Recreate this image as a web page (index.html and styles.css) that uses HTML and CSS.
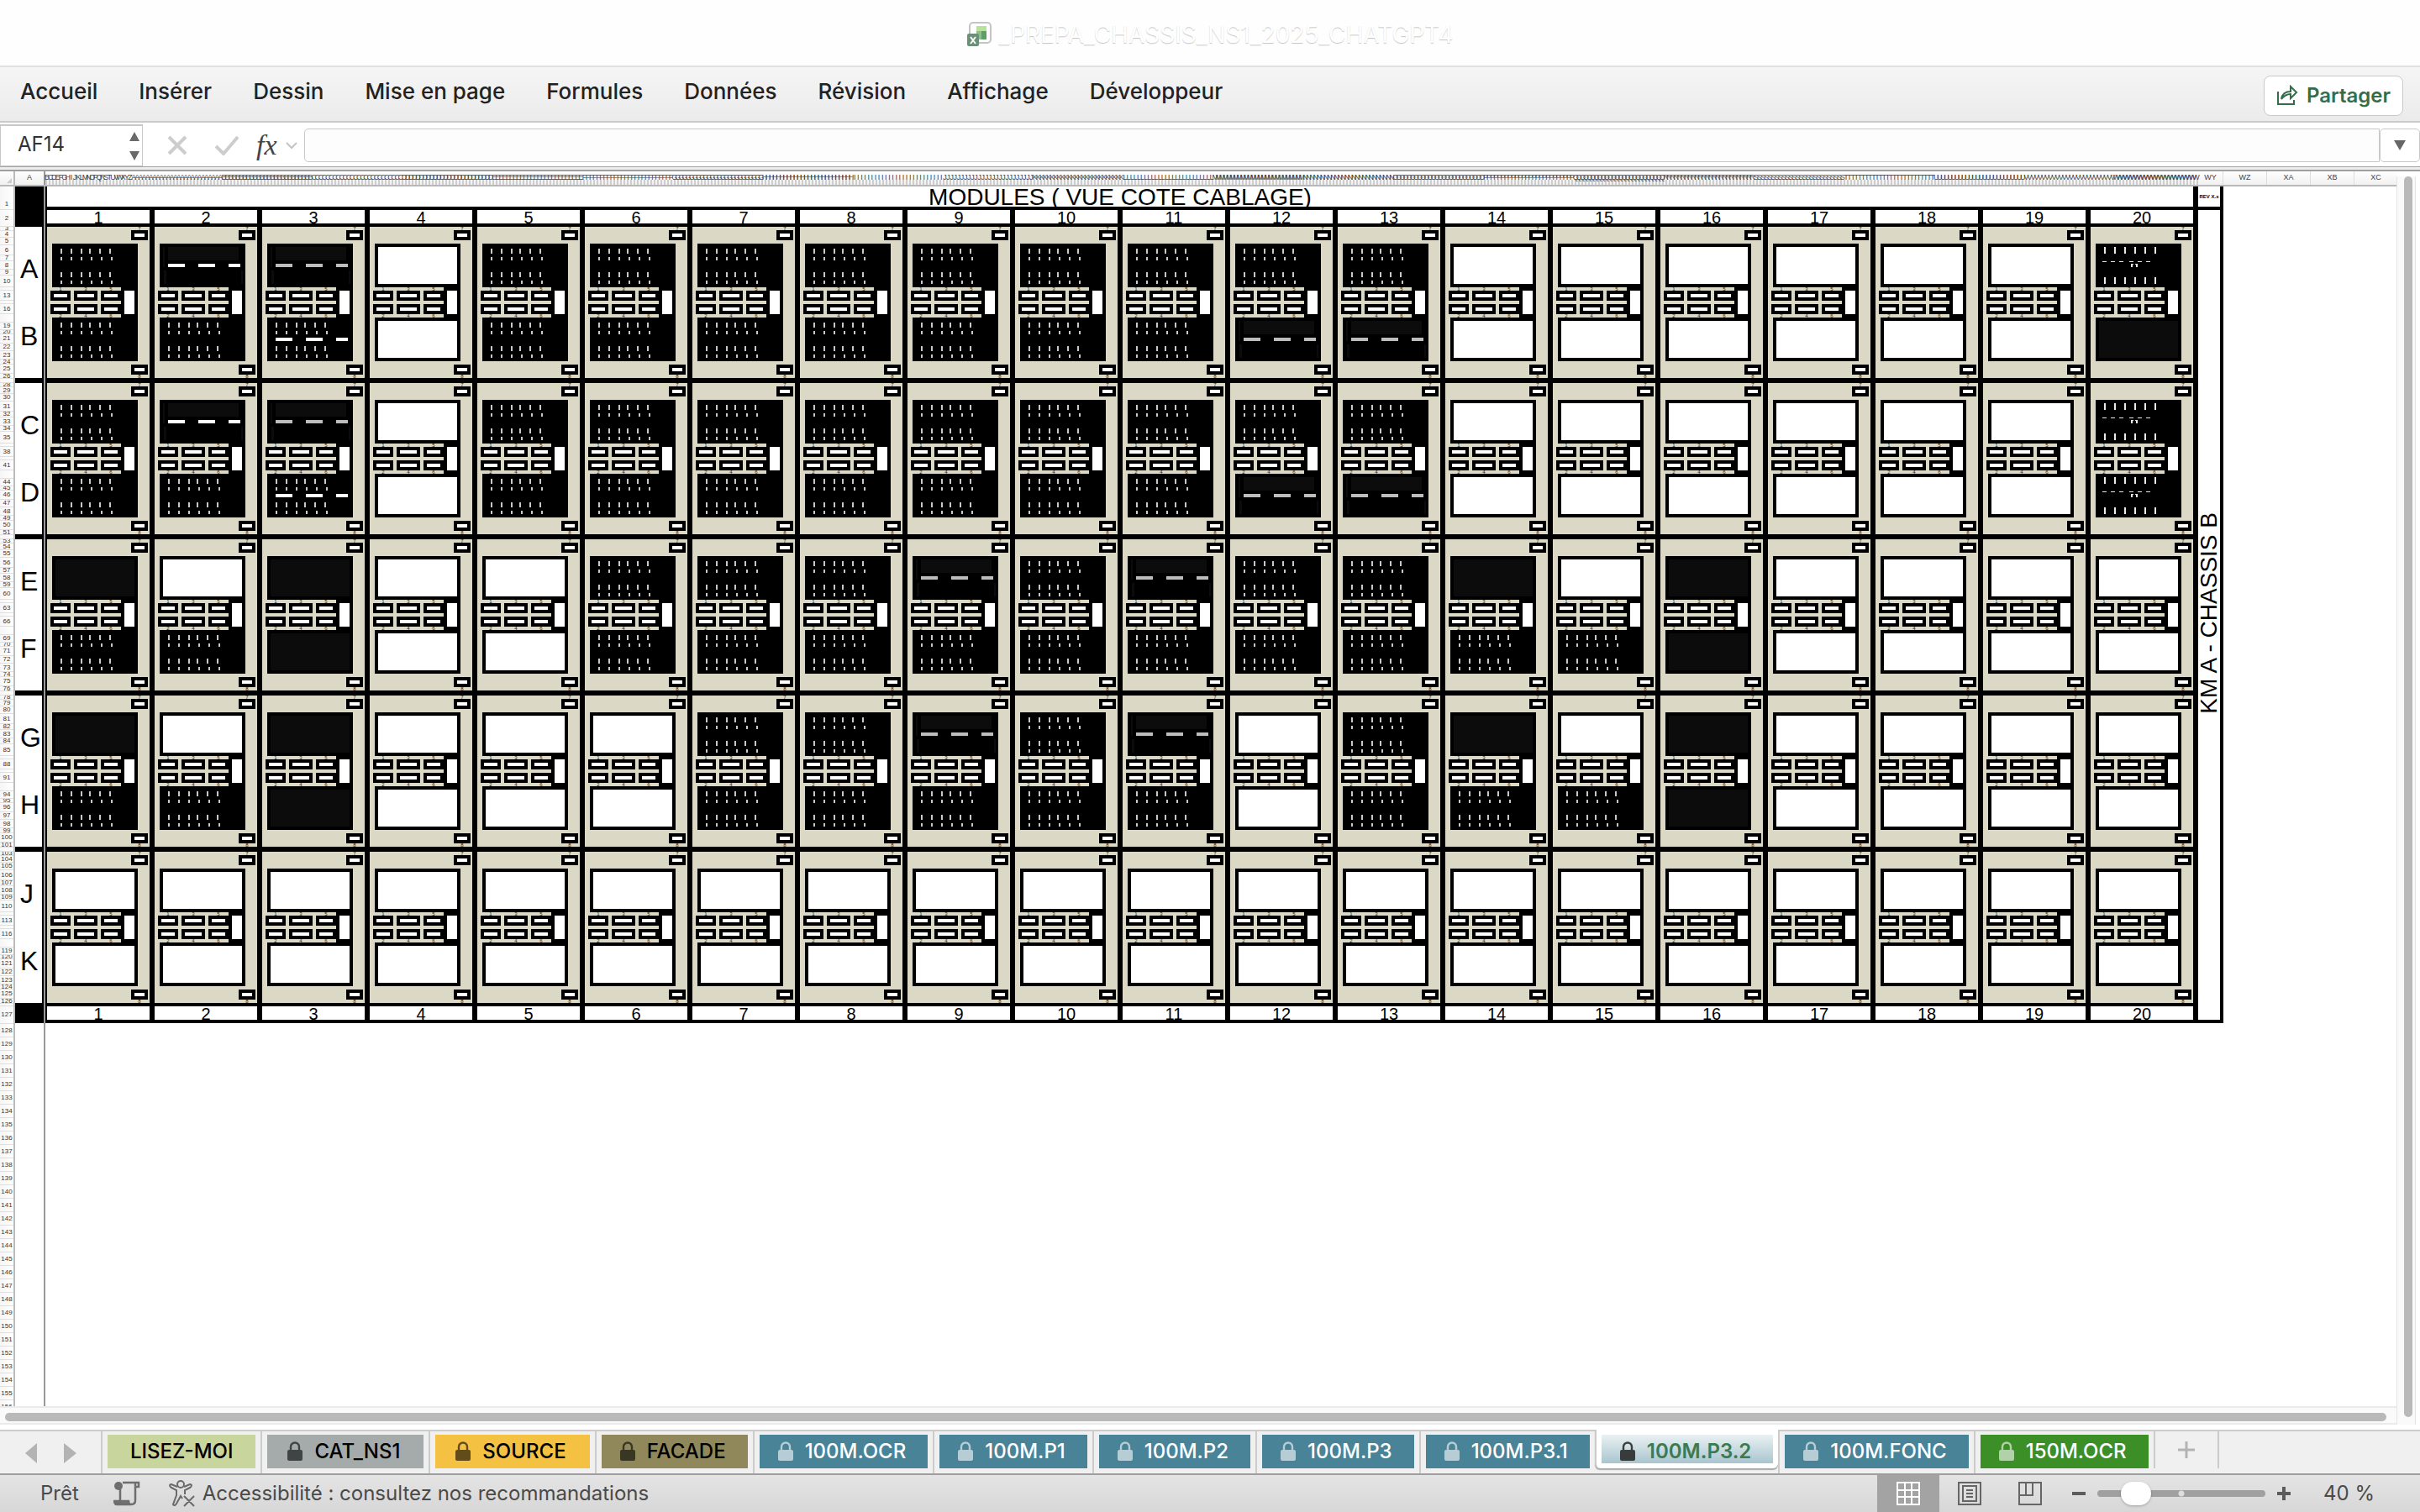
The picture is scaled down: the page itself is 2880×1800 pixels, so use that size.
FILE: index.html
```html
<!DOCTYPE html>
<html lang="fr">
<head>
<meta charset="utf-8">
<title>_PREPA_CHASSIS_NS1_2025_CHATGPT4</title>
<link rel="stylesheet" href="styles.css">
</head>
<body>
<svg class="defs" aria-hidden="true">
  <defs>
    <g id="pins" fill="#c9c9c9">
      <path d="M10 6h2v6h-2zM22 6h2v6h-2zM34 6h2v6h-2zM44 6h2v6h-2zM56 6h2v6h-2zM68 6h2v6h-2z"/>
      <path d="M10 16h2v4h-2zM22 16h2v4h-2zM34 16h2v4h-2zM46 16h2v4h-2zM58 16h2v4h-2zM70 16h2v4h-2z"/>
      <path d="M10 34h2v6h-2zM22 34h2v6h-2zM34 34h2v6h-2zM44 34h2v6h-2zM56 34h2v6h-2zM68 34h2v6h-2z"/>
      <path d="M10 44h2v4h-2zM22 44h2v4h-2zM34 44h2v4h-2zM46 44h2v4h-2zM58 44h2v4h-2zM70 44h2v4h-2z"/>
    </g>
    <path id="dash" d="M10 24h20v4h-20zM46 24h20v4h-20zM82 24h14v4h-14z"/>
    <path id="shade" fill="#0c0c0c" d="M10 4h84v16h-84zM4 4h2v24h-2zM5 32h3v16h-3zM97 32h2v16h-2z"/>
    <symbol id="lock" viewBox="0 0 18 24"><path d="M4 11V6.500a5 5 0 0 1 10 0V11" fill="none" stroke="currentColor" stroke-width="2.400"/><rect y="10" width="18" height="13" rx="2" fill="currentColor"/></symbol>
  </defs>
</svg>

<header class="titlebar">
  <svg class="doc-icon" viewBox="0 0 32 30"><rect x="4" y="1" width="25" height="24" rx="4" fill="#fdfdfd" stroke="#c4c4c4" stroke-width="2"/><path d="M12 5h12v6H12z" fill="#b5e39b"/><path d="M12 11h12v10H12z" fill="#8fbf86"/><path d="M18 11h6v10h-6z" fill="#5f9c68"/><rect x="1" y="14" width="14" height="15" rx="2" fill="#6a9078"/><path d="M5 18l6 8M11 18l-6 8" stroke="#fff" stroke-width="2"/></svg>
  <span class="doc-name">_PREPA_CHASSIS_NS1_2025_CHATGPT4</span>
</header>

<nav class="ribbon">
  <a href="#">Accueil</a><a href="#">Insérer</a><a href="#">Dessin</a><a href="#">Mise en page</a><a href="#">Formules</a><a href="#">Données</a><a href="#">Révision</a><a href="#">Affichage</a><a href="#">Développeur</a>
  <button class="share" type="button">
    <svg width="26" height="26" viewBox="0 0 26 26" fill="none" stroke="currentColor" stroke-width="2"><path d="M2 8v15h19v-5"/><path d="M6 17c1-7 5-9 11-9V2l7 7-7 7v-5c-5 0-8 2-11 6z"/></svg>
    Partager
  </button>
</nav>

<div class="formula-bar">
  <div class="name-box">
    <input type="text" value="AF14" aria-label="Zone Nom">
    <svg width="14" height="36" viewBox="0 0 14 36" fill="#6a6a6a"><path d="M7 1l6 11H1zM7 35l6-11H1z"/></svg>
  </div>
  <button type="button" class="plain" aria-label="Annuler"><svg width="24" height="24" viewBox="0 0 24 24"><path d="M2 2l20 20M22 2L2 22" stroke="#cdcdcd" stroke-width="4"/></svg></button>
  <button type="button" class="plain check" aria-label="Entrer"><svg width="30" height="24" viewBox="0 0 30 24"><path d="M2 13l9 9L28 2" fill="none" stroke="#cdcdcd" stroke-width="4"/></svg></button>
  <button type="button" class="plain fx" aria-label="Insérer une fonction">fx<svg width="14" height="10" viewBox="0 0 14 10"><path d="M1 2l6 6 6-6" fill="none" stroke="#c4c4c4" stroke-width="2"/></svg></button>
  <input class="formula" type="text" aria-label="Barre de formule">
  <button type="button" class="expand" aria-label="Développer"><svg width="14" height="12" viewBox="0 0 14 12"><path d="M0 0h14L7 12z" fill="#666"/></svg></button>
</div>

<main class="workspace">
  <div class="sheet">
    <div class="col-heads">
      <span class="corner"><svg width="6" height="6" viewBox="0 0 6 6"><path d="M6 0v6H0z" fill="#ccc"/></svg></span>
      <span class="head-a">A</span>
      <div class="head-dense" id="dense"></div>
      <span class="head-wy">WY</span><span>WZ</span><span>XA</span><span>XB</span><span>XC</span>
    </div>
    <div class="grid">
      <div class="row-nums" id="rownums"></div>
      <div class="col-a">
        <div class="solid top"></div>
        <div class="letters"><span>A</span><span>B</span></div>
        <div class="letters"><span>C</span><span>D</span></div>
        <div class="letters"><span>E</span><span>F</span></div>
        <div class="letters"><span>G</span><span>H</span></div>
        <div class="letters last"><span>J</span><span>K</span></div>
        <div class="solid bottom"></div>
      </div>
      <table class="chassis" id="chassis"></table>
    </div>
    <div class="hscroll"><i></i></div>
  </div>
  <div class="vscroll"><i></i></div>
</main>

<nav class="tabs">
  <div class="arrows"><svg width="62" height="24" viewBox="0 0 62 24" fill="#b3b3b3"><path d="M14 0v24L0 12zM46 0v24l15-12z"/></svg></div>
  <a href="#" class="tab nolock lime">LISEZ-MOI</a>
  <a href="#" class="tab grey"><svg><use href="#lock"/></svg>CAT_NS1</a>
  <a href="#" class="tab amber"><svg><use href="#lock"/></svg>SOURCE</a>
  <a href="#" class="tab olive"><svg><use href="#lock"/></svg>FACADE</a>
  <a href="#" class="tab teal"><svg><use href="#lock"/></svg>100M.OCR</a>
  <a href="#" class="tab teal"><svg><use href="#lock"/></svg>100M.P1</a>
  <a href="#" class="tab teal"><svg><use href="#lock"/></svg>100M.P2</a>
  <a href="#" class="tab teal"><svg><use href="#lock"/></svg>100M.P3</a>
  <a href="#" class="tab teal"><svg><use href="#lock"/></svg>100M.P3.1</a>
  <a href="#" class="tab active" aria-current="page"><svg><use href="#lock"/></svg>100M.P3.2</a>
  <a href="#" class="tab teal"><svg><use href="#lock"/></svg>100M.FONC</a>
  <a href="#" class="tab green"><svg><use href="#lock"/></svg>150M.OCR</a>
  <button type="button" class="add" aria-label="Nouvelle feuille"><svg width="20" height="20" viewBox="0 0 20 20"><path d="M10 0v20M0 10h20" stroke="#b3b3b3" stroke-width="3"/></svg></button>
</nav>

<footer class="status">
  <span>Prêt</span>
  <svg class="macro" width="32" height="30" viewBox="0 0 32 30"><path d="M8 9v15M11 2h19v5h-4M26 3v20c0 4-2 5-5 5H4c-3 0-3-4-3-4h17c0 3 1 4 3 4" fill="none" stroke="#6e6e6e" stroke-width="2.500"/><path d="M1 24h17l2 4H4z" fill="#6e6e6e"/><circle cx="6" cy="6" r="5" fill="#6e6e6e"/></svg>
  <svg class="a11y" width="32" height="32" viewBox="0 0 32 32" fill="none" stroke="#6a6a6a" stroke-width="2"><circle cx="14" cy="5" r="4"/><path d="M10 8L3 5c-3 0-2 3 0 4l6 3v6L5 29c1 2 3 1 4-1l5-9 2 3M18 8l7-3c3 0 2 3 0 4l-6 3v5M18 19l12 12M30 19L18 31"/></svg>
  <span>Accessibilité : consultez nos recommandations</span>
  <div class="views">
    <button type="button" class="on" aria-label="Normal"><svg width="28" height="28" viewBox="0 0 28 28" fill="none" stroke="#fff" stroke-width="2"><path d="M1 1h26v26H1zM1 10h26M1 18h26M10 1v26M18 1v26"/></svg></button>
    <button type="button" aria-label="Mise en page"><svg width="28" height="28" viewBox="0 0 28 28" fill="none" stroke="#666" stroke-width="2"><path d="M1 1h26v26H1zM6 5h16v18H6zM10 10h8M10 14h8M10 18h8"/></svg></button>
    <button type="button" aria-label="Aperçu des sauts de page"><svg width="28" height="28" viewBox="0 0 28 28" fill="none" stroke="#666" stroke-width="2"><path d="M1 1h26v26H1zM1 16h16V1M9 1v15"/></svg></button>
  </div>
  <button type="button" class="step" aria-label="Réduire"><svg width="16" height="16" viewBox="0 0 16 16"><path d="M0 8h16" stroke="#5c5c5c" stroke-width="4"/></svg></button>
  <input type="range" min="0" max="100" value="17" aria-label="Zoom">
  <button type="button" class="step" aria-label="Agrandir"><svg width="16" height="16" viewBox="0 0 16 16"><path d="M0 8h16M8 0v16" stroke="#5c5c5c" stroke-width="4"/></svg></button>
  <output>40 %</output>
</footer>
<script src="sheet.js"></script>
</body>
</html>
```
FILE: styles.css
```css
* { box-sizing: border-box; }
body {
  margin: 0;
  height: 100vh;
  display: flex;
  flex-direction: column;
  overflow: hidden;
  background: #fff;
  color: #222;
  font: 24px/32px Inter, "Liberation Sans", sans-serif;
}
a { color: inherit; text-decoration: none; }
button { font: inherit; border: 0; padding: 0; background: none; display: flex; align-items: center; justify-content: center; }
svg { display: block; flex: none; }
.defs { position: absolute; width: 0; height: 0; }

/* window title */
.titlebar {
  height: 80px;
  flex: none;
  display: flex;
  align-items: center;
  justify-content: center;
  gap: 6px;
  padding-top: 4px;
  background: #fefefe;
  border-bottom: 2px solid #e0e0e0;
}
.doc-icon { width: 32px; height: 30px; }
.doc-name { color: #fff; font-size: 28px; text-shadow: 0 1px 1px #c4c4c4; }

/* ribbon */
.ribbon {
  height: 66px;
  flex: none;
  display: flex;
  align-items: center;
  gap: 49px;
  padding: 0 20px 6px 24px;
  background: linear-gradient(#f5f5f5, #ebebeb);
  border-bottom: 2px solid #cacaca;
  font-size: 26px;
  font-weight: 500;
}
.share {
  margin: 10px 0 0 auto;
  height: 48px;
  width: 166px;
  gap: 10px;
  background: #fff;
  border: 1px solid #c9c9c9;
  border-radius: 8px;
  color: #336e4a;
  font-size: 24px;
  font-weight: 600;
}

/* formula bar */
.formula-bar {
  height: 58px;
  flex: none;
  display: flex;
  align-items: center;
  background: linear-gradient(#fff 0 52px, #a5a5a5 52px 53px, #ededed 53px 56px, #9f9f9f 56px);
  padding-bottom: 4px;
}
.name-box {
  width: 170px;
  height: 50px;
  display: flex;
  align-items: center;
  justify-content: space-between;
  padding-right: 2px;
  border: 1px solid #c8c8c8;
  border-top-width: 2px;
}
.name-box input { width: 120px; border: 0; padding: 0 0 4px 18px; font: inherit; font-size: 24px; color: #333; background: none; }
.name-box { padding-left: 0; }
.name-box input { padding-left: 20px; }
.plain { margin-left: 29px; }
.check { margin-left: 32px; }
.fx { margin-left: 20px; gap: 10px; font: italic 34px/32px "Liberation Serif", serif; color: #444; }
.formula {
  flex: 1;
  margin-left: 8px;
  height: 40px;
  border: 1px solid #c8c8c8;
  border-radius: 5px 0 0 5px;
  background: #fdfdfd;
}
.expand { width: 48px; height: 40px; border: 1px solid #c8c8c8; border-radius: 5px; }

/* worksheet */
.workspace { flex: 1; min-height: 0; display: flex; }
.sheet { flex: 1; min-width: 0; display: flex; flex-direction: column; }
.col-heads {
  height: 18px;
  flex: none;
  display: flex;
  overflow: hidden;
  background: linear-gradient(#fefefe, #f1f1f1);
  border-bottom: 2px solid #b8b8b8;
  font: 9px/14px "Liberation Sans", sans-serif;
  color: #444;
  text-align: center;
}
.col-heads > span { width: 52px; flex: none; border-right: 1px solid #ddd; }
.col-heads > .corner { width: 18px; padding: 8px 0 0 8px; border-right: 2px solid #bbb; }
.col-heads > .head-a { width: 36px; border-right: 2px solid #999; }
.col-heads > .head-wy { width: 30px; }
.head-dense {
  width: 2562px;
  flex: none;
  display: flex;
  background: repeating-linear-gradient(90deg, #cecece 0 2px, transparent 2px 4px) 0 10px no-repeat;
}
.head-dense span { flex: 1 1 0; width: 0; display: flex; justify-content: center; }

.grid { flex: 1; min-height: 0; overflow: hidden; display: flex; align-items: flex-start; }
.row-nums {
  width: 18px;
  flex: none;
  border-right: 2px solid #bbb;
  background: linear-gradient(90deg, #f6f6f6, #fff);
  font: 8px/8px "Liberation Sans", sans-serif;
  color: #333;
  text-align: center;
}
.row-nums span { display: flex; align-items: center; justify-content: center; overflow: hidden; border-bottom: 1px solid #e0e0e0; }
.row-nums .tall { padding-top: 14px; }

.col-a { width: 36px; flex: none; align-self: stretch; min-height: 1452px; border-right: 2px solid #999; }
.solid { background: #000; }
.solid.top { height: 48px; }
.solid.bottom { height: 24px; }
.letters {
  height: 186px;
  padding: 10px 0 10px 6px;
  border-right: 2px solid #000;
  border-bottom: 6px solid #000;
  color: #000;
  font: 32px/80px "Liberation Sans", sans-serif;
}
.letters.last { height: 180px; border-bottom: 0; }
.letters span { display: block; }

.chassis {
  width: 2592px;
  flex: none;
  table-layout: fixed;
  border-spacing: 0;
  border-left: 2px solid #000;
  color: #000;
  font: 20px/14px "Liberation Sans", sans-serif;
}
.chassis th, .chassis td { padding: 0; font-weight: 400; border: 0 solid #000; border-right-width: 6px; }
.chassis col { width: 128px; }
.chassis col.rev { width: 30px; }
.chassis .title { height: 28px; padding-top: 2px; border-bottom-width: 4px; font-size: 28px; line-height: 22px; }
.chassis .revision { border-right-width: 4px; border-bottom-width: 4px; font-size: 6px; line-height: 24px; font-weight: 700; text-align: center; white-space: nowrap; }
.chassis .num { height: 20px; padding-top: 2px; border-bottom-width: 4px; }
.chassis .name { border-right-width: 4px; border-bottom-width: 4px; font-size: 28px; line-height: 26px; }
.name span { writing-mode: vertical-rl; transform: rotate(180deg); white-space: nowrap; }
.chassis .slot { height: 186px; border-bottom-width: 6px; background: #dbd9c6; vertical-align: top; }
.chassis .slot.last { height: 184px; border-bottom-width: 4px; }

/* one module: tag, upper card, connectors, lower card, tag */
.module { height: 180px; display: flex; flex-direction: column; gap: 4px; }
.tag { width: 20px; margin-left: 100px; }
.box { height: 12px; border: 4px solid #000; background: #fff; }
.tiny { height: 4px; display: block; overflow: hidden; font-size: 6px; line-height: 4px; text-align: center; color: #222; }
.cards { width: 102px; margin-left: 6px; }
.card { display: block; width: 102px; height: 52px; background: #000; }
.mid { display: flex; gap: 4px; margin-left: -2px; height: 36px; }
.pair { width: 24px; display: grid; grid-template-rows: 4px 12px 4px 12px 4px; }
.pair.wide { width: 28px; }
.side { width: 20px; margin-left: -4px; border: 4px solid #000; background: #fff; }

/* scroll bars */
.hscroll { height: 22px; flex: none; margin-bottom: 6px; padding: 6px 12px 4px 6px; background: #fafafa; border: 2px solid #ebebeb; border-width: 2px 0; }
.hscroll i { display: block; height: 10px; border-radius: 5px; background: #b9b9b9; }
.vscroll { width: 28px; flex: none; margin: 6px 0; padding: 0 8px 9px; border-left: 1px solid #e4e4e4; background: linear-gradient(90deg, #fafafa 21px, #e4e4e4 21px 22px, #fff 22px); }
.vscroll i { display: block; width: 10px; height: 100%; border-radius: 5px; background: #b9b9b9; }

/* sheet tabs */
.tabs {
  height: 54px;
  flex: none;
  display: flex;
  background: #f0f0f0;
  border-top: 2px solid #cbcbcb;
  border-bottom: 2px solid #9e9e9e;
  font-size: 24px;
  font-weight: 500;
}
.arrows { width: 120px; padding: 14px 0 0 30px; }
.tab {
  position: relative;
  z-index: 0;
  display: flex;
  align-items: center;
  gap: 14px;
  height: 50px;
  padding: 0 34px 2px 30px;
  border-left: 2px solid #ccc;
  color: #000;
}
.tab::before { content: ""; position: absolute; z-index: -1; inset: 4px 6px 6px; background: var(--fill); }
.tab svg { width: 18px; height: 24px; opacity: .6; }
.tab.nolock { padding: 0 33px 2px; }
.lime { --fill: #c8d69d; }
.grey { --fill: #a5abab; }
.amber { --fill: #f5c143; }
.olive { --fill: #90885a; }
.tab.olive, .tab.teal, .tab.green, .tab.active { padding-left: 28px; padding-right: 32px; }
.tab.teal { --fill: #498397; color: #fff; }
.tab.green { --fill: #3c8e27; color: #fff; }
.tab.active {
  --fill: linear-gradient(#eaf1f3, #a9c5cf);
  height: 46px;
  margin-top: -2px;
  padding-top: 6px;
  padding-bottom: 0;
  background: #fff;
  border-radius: 0 0 6px 6px;
  box-shadow: 0 2px 1px #aaa;
  color: #3d7a50;
  font-weight: 600;
}
.tab.active::before { inset: 6px 6px 6px; }
.tab.active svg { color: #222; opacity: .85; }
.add { width: 78px; height: 44px; border: 2px solid #ccc; border-width: 0 2px; }

/* status bar */
.status {
  height: 44px;
  flex: none;
  display: flex;
  align-items: center;
  padding: 0 54px 0 48px;
  background: linear-gradient(#e4e4e4, #d7d7d7);
  color: #4a4a4a;
}
.macro { margin: 0 34px 0 41px; }
.a11y { margin-right: 8px; }
.views { display: flex; align-self: stretch; margin-left: auto; }
.views button { width: 72px; }
.views .on { background: #a3a3a3; width: 74px; }
.step { width: 16px; }
.views + .step { margin-left: 14px; }
input[type="range"] {
  appearance: none;
  width: 200px;
  height: 8px;
  margin: 0 14px;
  border-radius: 4px;
  background: radial-gradient(circle at 100px 4px, #ddd 3px, transparent 4px), #a0a0a0;
}
input[type="range"]::-webkit-slider-thumb {
  appearance: none;
  width: 36px;
  height: 28px;
  border-radius: 14px;
  background: #fff;
  box-shadow: 0 1px 3px #0004;
}
output { margin-left: 39px; }
```
FILE: sheet.js
```js
// P pins, W empty, K dark, D grey dashes, H white dashes, X pins with dashes, Q connector card
const rows = [
  ["PHDWPPPPPPPPPWWWWWWQ", "PPXWPPPPPPPDDWWWWWWK"],
  ["PHDWPPPPPPPPPWWWWWWQ", "PPXWPPPPPPPDDWWWWWWQ"],
  ["KWKWWPPPDPDPPKWKWWWW", "PPKWWPPPPPPPPPPKWWWW"],
  ["KWKWWWPPDPDWPKWKWWWW", "PPKWWWPPPPPWPPPKWWWW"],
  ["WWWWWWWWWWWWWWWWWWWW", "WWWWWWWWWWWWWWWWWWWW"]
];
const art = {
  P: '<use href="#pins"/>',
  W: '<path fill="#fff" d="M4 4h94v44h-94z"/>',
  K: '<path fill="#0c0c0c" d="M4 4h94v44h-94z"/>',
  D: '<use href="#shade"/><use href="#dash" fill="#bdbdbd"/>',
  H: '<use href="#shade"/><use href="#dash" fill="#fff"/>',
  X: '<use href="#pins"/><use href="#dash" fill="#fff"/>',
  Q: '<path fill="#e8e8e8" d="M10 4h2v8h-2zM22 4h2v8h-2zM34 4h2v8h-2zM46 4h2v8h-2zM58 4h2v8h-2zM70 4h2v8h-2zM10 40h2v8h-2zM22 40h2v8h-2zM34 40h2v8h-2zM46 40h2v8h-2zM58 40h2v8h-2zM70 40h2v8h-2zM8 21h5v1h-5zM18 21h5v1h-5zM28 21h5v1h-5zM40 21h5v1h-5zM50 21h5v1h-5zM60 21h5v1h-5zM42 24h3v1h-1v3h-2zM47 24h3v4h-2v-3h-1z"/>'
};
const card = k => `<svg class="card" viewBox="0 0 102 52">${art[k]}</svg>`;
const pair = (a, b, w = "") => `<div class="pair ${w}"><span class="tiny">${a}</span><div class="box"></div><i></i><div class="box"></div><span class="tiny">${b}</span></div>`;
const module = (up, low) => `<div class="module"><div class="tag"><span class="tiny">7</span><div class="box"></div></div>
<div class="cards">${card(up)}<div class="mid">${pair(1, 2)}${pair(3, 4, "wide")}${pair(5, 6)}<div class="side"></div></div>${card(low)}</div>
<div class="tag"><div class="box"></div><span class="tiny">8</span></div></div>`;

const cols = Array.from({ length: 20 }, (_, i) => i);
const nums = "<tr>" + cols.map(i => `<th class="num">${i + 1}</th>`).join("");
let html = `<colgroup>${cols.map(() => "<col>").join("")}<col class="rev"></colgroup>
<tr><th class="title" colspan="20">MODULES ( VUE COTE CABLAGE)</th><td class="revision">REV X.x</td></tr>
${nums}<td class="name" rowspan="7"><span>KM A - CHASSIS B</span></td></tr>`;
rows.forEach(([up, low], r) => {
  html += "<tr>" + cols.map(i => `<td class="slot${r === 4 ? " last" : ""}">${module(up[i], low[i])}</td>`).join("") + "</tr>";
});
document.getElementById("chassis").innerHTML = html + nums + "</tr>";

// row numbers: [offset in the band, height]; a null offset is a run of rows too thin to be labelled
const band = [[0, 5], [1, 8], [2, 9], [3, 12], [4, 7], [5, 10], [6, 7], [7, 14], [null, 4], [10, 12], [null, 4], [13, 12],
  [null, 10], [16, 9], [17, 5], [18, 11], [19, 9], [20, 10], [21, 6], [22, 11], [23, 6], [null, 5]];
const label = (n, h, c = "") => `<span class="${c}" style="height:${h}px">${n}</span>`;
let side = label(1, 28, "tall") + label(2, 20);
for (let b = 0; b < 5; b++) {
  for (const [n, h] of band) side += label(n === null ? "" : 3 + b * 25 + n, b === 4 && n === null && h === 5 ? 3 : h);
}
side += label(127, 21);
for (let n = 128; n <= 156; n++) side += label(n, 16);
document.getElementById("rownums").innerHTML = side;

// leading letter of each narrow column, B to WX
let dense = "";
for (let n = 2; n <= 622; n++) {
  const first = n <= 26 ? n : Math.floor((n - 1) / 26);
  dense += `<span>${String.fromCharCode(64 + first)}</span>`;
}
document.getElementById("dense").innerHTML = dense;
```
